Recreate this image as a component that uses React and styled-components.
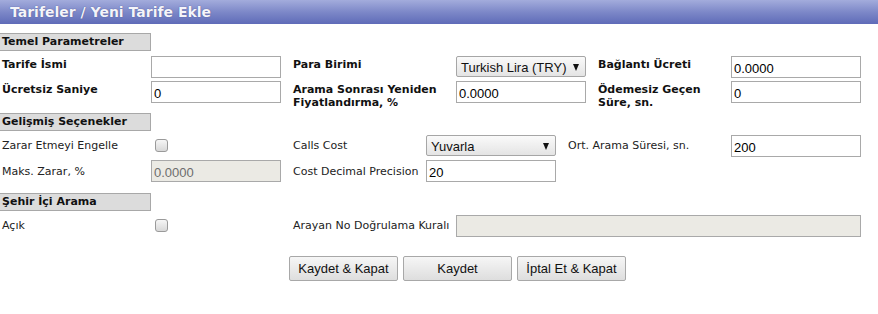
import React from "react";
import styled, { createGlobalStyle } from "styled-components";

const Global = createGlobalStyle`
  body {
    margin: 0;
    background: #fff;
    font-family: "DejaVu Sans", Verdana, sans-serif;
    font-size: 11px;
    color: #111;
  }
`;

const Header = styled.div`
  height: 24px;
  background: linear-gradient(#a3acdc, #7d88c8 50%, #5f6bb8);
  color: #f4f4fa;
  font-weight: bold;
  font-size: 14px;
  padding-left: 10px;
  line-height: 25px;
  text-shadow: 0 0 1px #3a4480;
`;

const Body = styled.div`
  padding-top: 9px;
`;

const SectionTitle = styled.div`
  width: 148px;
  height: 16px;
  background: #dcdcdc;
  border: 1px solid #a8a8a8;
  border-left: none;
  font-weight: bold;
  line-height: 16px;
  padding-left: 2px;
  box-sizing: content-box;
`;

const Grid = styled.div`
  display: grid;
  grid-template-columns: ${(p) => p.cols};
  row-gap: ${(p) => p.gap || "3px"};
  padding: ${(p) => p.pad || "5px 0 12px"};
  align-items: start;
`;

const Label = styled.div`
  font-weight: ${(p) => (p.bold ? "bold" : "normal")};
  color: ${(p) => (p.bold ? "#111" : "#222")};
  padding: ${(p) => p.pt || "3px"} 0 0 ${(p) => p.pl || "2px"};
  line-height: 13px;
  white-space: ${(p) => (p.bold ? "normal" : "nowrap")};
`;

const Input = styled.input`
  box-sizing: border-box;
  width: ${(p) => p.w || "130px"};
  height: 22px;
  border: 1px solid #a9a9a9;
  background: ${(p) => (p.disabled ? "#ebeae4" : "#fff")};
  font-family: "Liberation Sans", Arial, sans-serif;
  font-size: 13px;
  color: ${(p) => (p.disabled ? "#6d6d6d" : "#000")};
  padding: 3px 2px 0;
  margin: 0;
  outline: none;
`;

const Select = styled.div`
  box-sizing: border-box;
  width: 130px;
  height: 21px;
  border: 1px solid #a6a6a6;
  border-radius: 2px;
  background: linear-gradient(#fafafa, #e4e4e4);
  font-family: "Liberation Sans", Arial, sans-serif;
  font-size: 13px;
  display: flex;
  align-items: center;
  justify-content: space-between;
  padding: 1px 6px 0 4px;
  &::after {
    content: "";
    border-left: 3.5px solid transparent;
    border-right: 3.5px solid transparent;
    border-top: 7px solid #111;
  }
`;

const Check = styled.span`
  display: block;
  width: 11px;
  height: 11px;
  margin: 4px 0 0 4px;
  border: 1px solid #9a9a9a;
  border-radius: 3px;
  background: linear-gradient(#f6f6f6, #d8d8d8);
`;

const Buttons = styled.div`
  display: flex;
  gap: 5px;
  padding: 4px 0 0 289px;
`;

const Button = styled.button`
  width: 109px;
  height: 25px;
  border: 1px solid #a8a8a8;
  border-radius: 2px;
  background: linear-gradient(#f6f6f6, #dedede);
  font-family: "Liberation Sans", Arial, sans-serif;
  font-size: 13px;
  color: #111;
  padding: 0;
`;

export default function App() {
  return (
    <>
      <Global />
      <Header>Tarifeler / Yeni Tarife Ekle</Header>
      <Body>
        <SectionTitle>Temel Parametreler</SectionTitle>
        <Grid cols="151px 140px 165px 140px 135px 130px" pad="5px 0 4px" gap="3px">
          <Label bold pt="2px">Tarife İsmi</Label>
          <Input />
          <Label bold pt="2px">Para Birimi</Label>
          <Select>Turkish Lira (TRY)</Select>
          <Label bold pt="2px">Bağlantı Ücreti</Label>
          <Input defaultValue="0.0000" />

          <Label bold pt="2px">Ücretsiz Saniye</Label>
          <Input defaultValue="0" />
          <Label bold pt="2px">Arama Sonrası Yeniden Fiyatlandırma, %</Label>
          <Input defaultValue="0.0000" />
          <Label bold pt="2px">Ödemesiz Geçen Süre, sn.</Label>
          <Input defaultValue="0" />
        </Grid>

        <SectionTitle>Gelişmiş Seçenekler</SectionTitle>
        <Grid cols="151px 140px 135px 140px 165px 130px" pad="4px 0 11px" gap="3px">
          <Label pt="4px">Zarar Etmeyi Engelle</Label>
          <Check />
          <Label pt="4px">Calls Cost</Label>
          <Select>Yuvarla</Select>
          <Label pt="4px">Ort. Arama Süresi, sn.</Label>
          <Input defaultValue="200" />

          <Label pt="5px">Maks. Zarar, %</Label>
          <Input disabled defaultValue="0.0000" />
          <Label pt="5px">Cost Decimal Precision</Label>
          <Input defaultValue="20" />
        </Grid>

        <SectionTitle>Şehir İçi Arama</SectionTitle>
        <Grid cols="151px 140px 165px 405px" pad="4px 0 15px">
          <Label pt="4px">Açık</Label>
          <Check />
          <Label pt="4px">Arayan No Doğrulama Kuralı</Label>
          <Input disabled w="405px" />
        </Grid>

        <Buttons>
          <Button>Kaydet &amp; Kapat</Button>
          <Button>Kaydet</Button>
          <Button>İptal Et &amp; Kapat</Button>
        </Buttons>
      </Body>
    </>
  );
}
